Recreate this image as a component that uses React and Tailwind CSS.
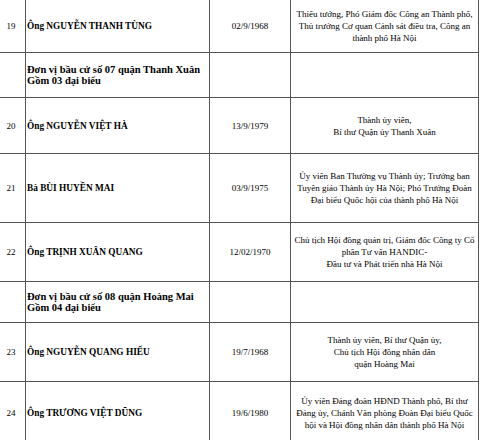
import React from 'react'

const rows = [
  {
    no: '19',
    name: 'Ông NGUYỄN THANH TÙNG',
    dob: '02/9/1968',
    role: ['Thiếu tướng, Phó Giám đốc Công an Thành phố,', 'Thủ trưởng Cơ quan Cảnh sát điều tra, Công an', 'thành phố Hà Nội'],
    h: 'h-[53px]'
  },
  {
    unit: ['Đơn vị bầu cử số 07 quận Thanh Xuân', 'Gồm 03 đại biểu'],
    h: 'h-[45px]'
  },
  {
    no: '20',
    name: 'Ông NGUYỄN VIỆT HÀ',
    dob: '13/9/1979',
    role: ['Thành ủy viên,', 'Bí thư Quận ủy Thanh Xuân'],
    h: 'h-[56px]'
  },
  {
    no: '21',
    name: 'Bà BÙI HUYỀN MAI',
    dob: '03/9/1975',
    role: ['Ủy viên Ban Thường vụ Thành ủy; Trưởng ban', 'Tuyên giáo Thành ủy Hà Nội; Phó Trưởng Đoàn', 'Đại biểu Quốc hội của thành phố Hà Nội'],
    h: 'h-[69px]'
  },
  {
    no: '22',
    name: 'Ông TRỊNH XUÂN QUANG',
    dob: '12/02/1970',
    role: ['Chủ tịch Hội đồng quản trị, Giám đốc Công ty Cổ', 'phần Tư vấn HANDIC-', 'Đầu tư và Phát triển nhà Hà Nội'],
    h: 'h-[59px]'
  },
  {
    unit: ['Đơn vị bầu cử số 08 quận Hoàng Mai', 'Gồm 04 đại biểu'],
    h: 'h-[41px]'
  },
  {
    no: '23',
    name: 'Ông NGUYỄN QUANG HIẾU',
    dob: '19/7/1968',
    role: ['Thành ủy viên, Bí thư Quận ủy,', 'Chủ tịch Hội đồng nhân dân', 'quận Hoàng Mai'],
    h: 'h-[59px]'
  },
  {
    no: '24',
    name: 'Ông TRƯƠNG VIỆT DŨNG',
    dob: '19/6/1980',
    role: ['Ủy viên Đảng đoàn HĐND Thành phố, Bí thư', 'Đảng ủy, Chánh Văn phòng Đoàn Đại biểu Quốc', 'hội và Hội đồng nhân dân thành phố Hà Nội'],
    h: 'h-[62px]'
  }
]

export default function App() {
  return (
    <div className="w-[480px] h-[440px] overflow-hidden bg-white text-black font-['Liberation_Serif','Times_New_Roman',serif] text-[9px] leading-[12px]">
      <div className="w-[479px] border-r border-[#555]">
        {rows.map((r, i) => (
          <div key={i} className={`flex border-b border-[#555] ${r.h}`}>
            {/* STT */}
            <div className="w-[26px] shrink-0 border-r border-[#555] flex items-center justify-center pr-[3px]">
              {r.no}
            </div>
            {/* Ho ten / don vi */}
            <div className="w-[184px] shrink-0 border-r border-[#555] flex flex-col justify-center pl-[1px] font-bold">
              {r.unit ? (
                r.unit.map((t) => <div key={t} className="text-[10.5px] leading-[11px] whitespace-nowrap">{t}</div>)
              ) : (
                <div className="text-[9.3px] whitespace-nowrap">{r.name}</div>
              )}
            </div>
            {/* Ngay sinh */}
            <div className="w-[81px] shrink-0 border-r border-[#555] flex items-center justify-center">
              {r.dob}
            </div>
            {/* Chuc vu */}
            <div className="flex-1 flex flex-col items-center justify-center text-center">
              {r.role && r.role.map((t) => <div key={t} className="whitespace-nowrap">{t}</div>)}
            </div>
          </div>
        ))}
      </div>
    </div>
  )
}
